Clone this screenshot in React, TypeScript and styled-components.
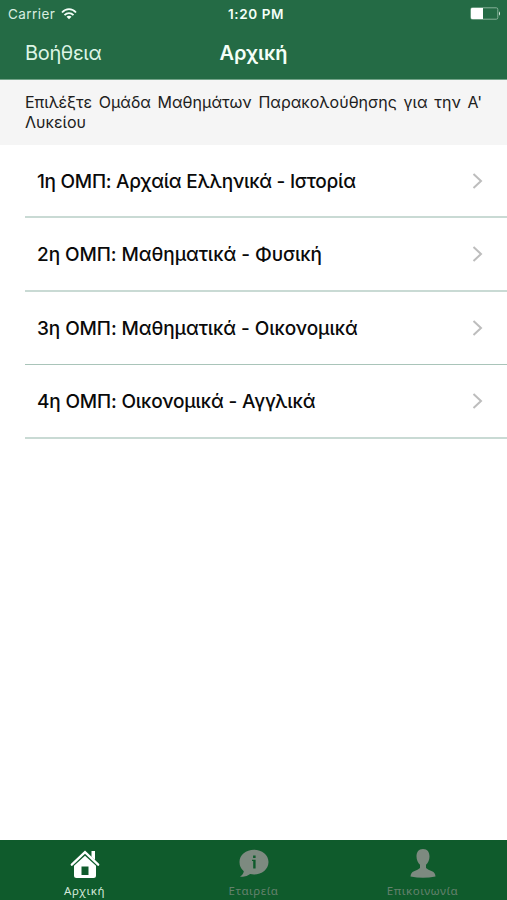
import React from "react";
import styled, { createGlobalStyle } from "styled-components";

const GlobalStyle = createGlobalStyle`
  *, *::before, *::after { box-sizing: border-box; }
  body { margin: 0; background: #fff; }
`;

const Screen = styled.div`
  display: flex;
  flex-direction: column;
  width: 507px;
  height: 900px;
  overflow: hidden;
  background: #fff;
  color: #0a0a0a;
  font-family: Inter, "Noto Sans", sans-serif;
`;

const Header = styled.header`
  flex: none;
  height: 80px;
  background: #246b45;
  border-bottom: 1px solid #73a489;
  color: #f4fff8;
`;

const StatusBar = styled.div`
  display: grid;
  grid-template-columns: 1fr auto 1fr;
  align-items: center;
  height: 27px;
  padding: 0 6px 0 8px;
  font-size: 13.5px;
`;

const Carrier = styled.div`
  display: flex;
  align-items: center;
  gap: 6px;
  letter-spacing: 0.45px;
  color: #d8eee0;
`;

const Time = styled.div`
  font-weight: 600;
  font-size: 13.5px;
  letter-spacing: 0.6px;
  padding-left: 3px;
`;

const BatterySlot = styled.div`
  display: flex;
  justify-content: flex-end;
`;

const NavBar = styled.nav`
  display: grid;
  grid-template-columns: 1fr auto 1fr;
  align-items: center;
  height: 52px;
  padding: 0 25px;
`;

const HelpButton = styled.button`
  justify-self: start;
  padding: 0;
  border: 0;
  background: none;
  color: #dcf5e5;
  font: 400 20px/28px Inter, sans-serif;
  letter-spacing: -0.35px;
`;

const Title = styled.h1`
  margin: 0;
  font-size: 20px;
  line-height: 28px;
  font-weight: 600;
`;

const Prompt = styled.p`
  flex: none;
  height: 65px;
  margin: 0;
  padding: 12px 25px 0;
  background: #f5f5f5;
  color: #202020;
  font-size: 16px;
  line-height: 20px;
  text-align: justify;
`;

const List = styled.ul`
  flex: 1;
  margin: 0;
  padding: 0 0 0 25px;
  list-style: none;
`;

const Row = styled.li<{ $crisp?: boolean }>`
  display: flex;
  align-items: center;
  justify-content: space-between;
  height: 73.4px;
  padding: 0 24px 0 12px;
  border-bottom: ${(p) => (p.$crisp ? "1px solid #a9c4b9" : "2px solid #c9dad4")};
`;

const RowLabel = styled.span<{ $tracking: number }>`
  padding-top: 1px;
  font-size: 19px;
  font-weight: 500;
  letter-spacing: ${(p) => p.$tracking}px;
  white-space: nowrap;
`;

const TabBar = styled.footer`
  flex: none;
  display: grid;
  grid-template-columns: repeat(3, 1fr);
  height: 60px;
  background: #0f5b2c;
`;

const Tab = styled.div<{ $active?: boolean }>`
  display: flex;
  flex-direction: column;
  align-items: center;
  padding-top: 9px;
  color: ${(p) => (p.$active ? "#fff" : "#7d8a80")};
`;

const TabLabel = styled.span<{ $active?: boolean }>`
  margin-top: 6px;
  font: 400 11.5px/14px "Noto Sans", sans-serif;
  letter-spacing: 0.5px;
  color: ${(p) => (p.$active ? "#d3e8d9" : "#64816c")};
`;

const Wifi = () => (
  <svg width="16" height="12" viewBox="0 0 16 12" fill="none" stroke="#f4fff8" strokeWidth="1.8">
    <path d="M1 4.5C5-.1 11-.1 15 4.5M3.5 7.2C6.1 4.3 9.9 4.3 12.5 7.2" />
    <path d="M8 11.2 5.5 8.7C6.8 7.3 9.2 7.3 10.5 8.7Z" fill="#f4fff8" stroke="none" />
  </svg>
);

const Battery = () => (
  <svg width="31" height="13" viewBox="0 0 31 13">
    <rect x=".8" y=".8" width="27" height="11.4" rx="1.5" fill="none" stroke="#87b199" strokeWidth="1" />
    <path d="M2 1h11v11H2Q1 12 1 11V2Q1 1 2 1Z" fill="#fff" />
    <path d="M29 4.2Q31 6.5 29 8.8Z" fill="#e6f5eb" />
  </svg>
);

const Chevron = () => (
  <svg width="11" height="16" viewBox="0 0 11 16" fill="none" stroke="#bdbdbd" strokeWidth="2">
    <path d="M1.5 1 9 8 1.5 15" />
  </svg>
);

const HomeIcon = () => (
  <svg width="30" height="29" viewBox="0 0 30 29">
    <path d="M1.8 15.7 15 3.2 28.2 15.7" fill="none" stroke="#fff" strokeWidth="2.3" strokeLinecap="round" />
    <path d="M21.5 2H25v9l-3.5-3Z" fill="#fff" />
    <path fillRule="evenodd" d="M15 6.8 26 16.7V26.5Q26 29 23.5 29H6.5Q4 29 4 26.5V16.7ZM11.5 17.5V26h7V17.5Z" fill="#fff" />
  </svg>
);

const InfoIcon = () => (
  <svg width="30" height="29" viewBox="0 0 30 29">
    <path d="M15 .8C23 .8 29.5 6 29.5 13S23 25.5 15 25.5Q13 25.5 11.2 25.1Q6.5 28.7 1 27.4Q4.4 25.6 4.8 22.2Q.5 18.8.5 13C.5 6 7 .8 15 .8Z" fill="currentColor" />
    <path d="M13 10.8h3.6v8.7H14.2v-7.4H13ZM14.1 6.6h2.5V9h-2.5Z" fill="#0f5b2c" />
  </svg>
);

const PersonIcon = () => (
  <svg width="26" height="29" viewBox="0 0 26 29">
    <path d="M13 0C17.5 0 19.5 3 19.5 7.5C19.5 11 18 14 16 15.8V19Q18 21 22 22.2Q25.3 23.5 25.5 27.5Q19 28.7 13 28.7T.5 27.5Q.7 23.5 4 22.2Q8 21 10 19V15.8C8 14 6.5 11 6.5 7.5C6.5 3 8.5 0 13 0Z" fill="currentColor" />
  </svg>
);

const groups = [
  { label: "1η ΟΜΠ: Αρχαία Ελληνικά - Ιστορία", tracking: -0.27 },
  { label: "2η ΟΜΠ: Μαθηματικά - Φυσική", tracking: -0.07 },
  { label: "3η ΟΜΠ: Μαθηματικά - Οικονομικά", tracking: -0.09, crisp: true },
  { label: "4η ΟΜΠ: Οικονομικά - Αγγλικά", tracking: -0.18 },
];

export default function App() {
  return (
    <>
      <GlobalStyle />
      <Screen>
        <Header>
          <StatusBar>
            <Carrier>Carrier <Wifi /></Carrier>
            <Time>1:20 PM</Time>
            <BatterySlot><Battery /></BatterySlot>
          </StatusBar>
          <NavBar>
            <HelpButton>Βοήθεια</HelpButton>
            <Title>Αρχική</Title>
          </NavBar>
        </Header>
        <Prompt>Επιλέξτε Ομάδα Μαθημάτων Παρακολούθησης για την Α' Λυκείου</Prompt>
        <List>
          {groups.map((g) => (
            <Row key={g.label} $crisp={g.crisp}>
              <RowLabel $tracking={g.tracking}>{g.label}</RowLabel>
              <Chevron />
            </Row>
          ))}
        </List>
        <TabBar>
          <Tab $active><HomeIcon /><TabLabel $active>Αρχική</TabLabel></Tab>
          <Tab><InfoIcon /><TabLabel>Εταιρεία</TabLabel></Tab>
          <Tab><PersonIcon /><TabLabel>Επικοινωνία</TabLabel></Tab>
        </TabBar>
      </Screen>
    </>
  );
}
